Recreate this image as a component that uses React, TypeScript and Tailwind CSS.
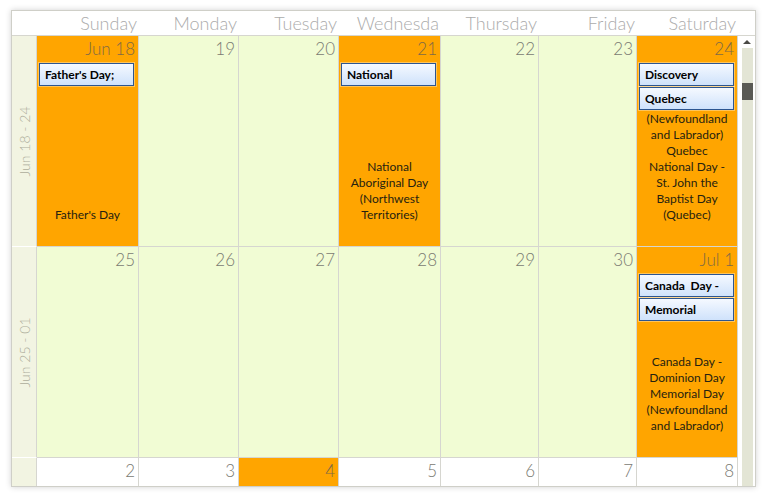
type Cell = {
  date: string;
  orange?: boolean;
  appts?: string[];
  lines?: string[];
};

const DAYS = ['Sunday', 'Monday', 'Tuesday', 'Wednesda', 'Thursday', 'Friday', 'Saturday'];

// column widths as measured in the reference (border included)
const COLS = ['w-[102px]', 'w-[100px]', 'w-[100px]', 'w-[102px]', 'w-[98px]', 'w-[98px]', 'w-[101px]'];

const WEEKS: { label: string; cells: Cell[]; white?: boolean }[] = [
  {
    label: 'Jun 18 - 24',
    cells: [
      { date: 'Jun 18', orange: true, appts: ["Father's Day;"], lines: ["Father's Day"] },
      { date: '19' },
      { date: '20' },
      {
        date: '21',
        orange: true,
        appts: ['National'],
        lines: ['National', 'Aboriginal Day', '(Northwest', 'Territories)'],
      },
      { date: '22' },
      { date: '23' },
      {
        date: '24',
        orange: true,
        appts: ['Discovery', 'Quebec'],
        lines: [
          '(Newfoundland',
          'and Labrador)',
          'Quebec',
          'National Day -',
          'St. John the',
          'Baptist Day',
          '(Quebec)',
        ],
      },
    ],
  },
  {
    label: 'Jun 25 - 01',
    cells: [
      { date: '25' },
      { date: '26' },
      { date: '27' },
      { date: '28' },
      { date: '29' },
      { date: '30' },
      {
        date: 'Jul 1',
        orange: true,
        appts: ['Canada  Day -', 'Memorial'],
        lines: ['Canada Day -', 'Dominion Day', 'Memorial Day', '(Newfoundland', 'and Labrador)'],
      },
    ],
  },
  {
    label: '',
    white: true,
    cells: [
      { date: '2' },
      { date: '3' },
      { date: '4', orange: true },
      { date: '5' },
      { date: '6' },
      { date: '7' },
      { date: '8' },
    ],
  },
];

function Appointment({ title }: { title: string }) {
  return (
    <div className="h-[23px] w-[95px] border border-[#2c5590] bg-gradient-to-b from-[#f5f9ff] to-[#cfe2fb] pl-[5px] text-[12px] font-bold leading-[21px] text-black whitespace-pre shadow-[0_0_0_1px_rgba(255,255,255,0.35)]">
      {title}
    </div>
  );
}

function DayCell({ cell, white, width }: { cell: Cell; white?: boolean; width: string }) {
  const bg = cell.orange ? 'bg-[#ffa500]' : white ? 'bg-white' : 'bg-[#f1fcd4]';
  return (
    <div className={`grid ${width} shrink-0 overflow-hidden border-r border-b border-[#d6d6d0] ${bg}`}>
      {cell.lines && (
        <div className="col-start-1 row-start-1 self-end mb-[23px] text-center text-[12px] leading-[16px] text-[#262210]">
          {cell.lines.map((l, i) => (
            <div key={i}>{l}</div>
          ))}
        </div>
      )}
      <div className="col-start-1 row-start-1 flex flex-col">
        <div
          className={`h-[27px] pr-[3px] text-right text-[17px] font-light leading-[26px] ${
            cell.orange ? 'text-[#7e6a45]' : 'text-[#7a7a72]'
          }`}
        >
          {cell.date}
        </div>
        <div className="flex flex-col gap-px pl-[2px]">
          {cell.appts?.map((a, i) => (
            <Appointment key={i} title={a} />
          ))}
        </div>
      </div>
    </div>
  );
}

export default function App() {
  return (
    <div className="h-[501px] w-[770px] bg-white pl-[11px] pt-[10px] font-['Lato','Liberation_Sans',sans-serif]">
      <div className="flex h-[477px] w-[745px] flex-col overflow-hidden border border-[#cfcfc8] bg-white shadow-[0_0_6px_rgba(0,0,0,0.18)]">
        <div className="flex h-[25px] shrink-0 border-b border-[#d6d6cf]">
          <div className="w-[25px] shrink-0" />
          {DAYS.map((d, i) => (
            <div
              key={d}
              className={`${COLS[i]} shrink-0 overflow-hidden whitespace-nowrap pr-[2px] text-right text-[18px] font-light leading-[24px] text-[#ababab]`}
            >
              {d}
            </div>
          ))}
        </div>
        <div className="flex min-h-0 flex-1">
          <div className="flex flex-col">
            {WEEKS.map((w, i) => (
              <div key={i} className={`flex shrink-0 ${w.white ? 'h-[40px]' : 'h-[211px]'}`}>
                <div className="flex w-[25px] shrink-0 items-center justify-center border-r border-b border-r-[#d6d6d0] border-b-white bg-[#f2f4e2]">
                  {w.label && (
                    <span className="-rotate-90 whitespace-nowrap text-[14px] font-light text-[#aeae9c]">
                      {w.label}
                    </span>
                  )}
                </div>
                {w.cells.map((c, j) => (
                  <DayCell key={j} cell={c} white={w.white} width={COLS[j]} />
                ))}
              </div>
            ))}
          </div>
          <div className="flex w-[17px] shrink-0 flex-col items-center pl-[1px]">
            <div className="flex h-[11px] items-center justify-center pt-[1px]">
              <div className="h-0 w-0 border-x-[4px] border-b-[4px] border-x-transparent border-b-[#4a4a46]" />
            </div>
            <div className="mt-[1px] w-[11px] flex-1 bg-[#e3e5d5] pt-[35px]">
              <div className="h-[17px] w-full bg-[#5a5a55]" />
            </div>
          </div>
        </div>
      </div>
    </div>
  );
}
